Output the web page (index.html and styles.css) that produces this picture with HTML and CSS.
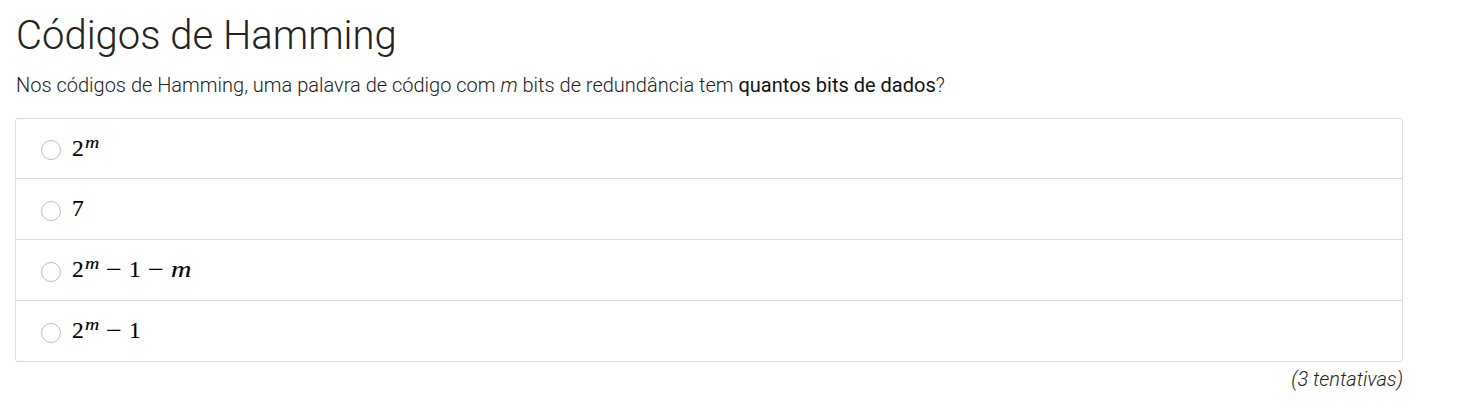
FILE: index.html
```html
<!DOCTYPE html>
<html lang="pt">
<head>
<meta charset="utf-8">
<title>Códigos de Hamming</title>
<link rel="stylesheet" href="styles.css">
</head>
<body>
<div class="page">
  <h1 class="title">Códigos de Hamming</h1>
  <p class="question">Nos códigos de Hamming, uma palavra de código com <em>m</em> bits de redundância tem <strong>quantos bits de dados</strong>?</p>
  <ul class="options">
    <li class="option"><span class="radio"></span><span class="math">2<sup><i>m</i></sup></span></li>
    <li class="option"><span class="radio"></span><span class="math">7</span></li>
    <li class="option"><span class="radio"></span><span class="math">2<sup><i>m</i></sup><span class="op">−</span>1<span class="op">−</span><i>m</i></span></li>
    <li class="option"><span class="radio"></span><span class="math">2<sup><i>m</i></sup><span class="op">−</span>1</span></li>
  </ul>
  <div class="attempts">(3 tentativas)</div>
</div>
</body>
</html>
```

FILE: styles.css
```css
html, body {
  margin: 0;
  padding: 0;
  background: #fff;
}
body {
  font-family: Roboto, "Liberation Sans", sans-serif;
  color: #333;
}
.page {
  width: 1388px;
  margin-left: 15px;
  padding-top: 12px;
}
.title {
  margin: 0 0 0 1px;
  font-weight: 300;
  font-size: 40px;
  line-height: 48px;
  color: #222;
}
.question {
  margin: 11px 0 19px 1px;
  font-size: 20px;
  font-weight: 300;
  line-height: 28px;
  color: #222;
}
.question em {
  font-style: italic;
}
.question strong {
  font-weight: 400;
  color: #111;
}
.options {
  list-style: none;
  margin: 0;
  padding: 0;
  border: 1px solid #dcdcdc;
  border-radius: 3px;
}
.option {
  display: flex;
  align-items: center;
  height: 60px;
  padding-left: 25px;
  border-top: 1px solid #dcdcdc;
}
.option:first-child {
  border-top: none;
  height: 59px;
}
.radio {
  width: 20px;
  height: 20px;
  border: 1px solid #b9bdc1;
  border-radius: 50%;
  box-sizing: border-box;
  margin-right: 11px;
  margin-top: 3px;
  flex: none;
}
.math {
  font-family: "Liberation Serif", "DejaVu Serif", serif;
  font-size: 23.5px;
  color: #000;
  line-height: 1;
  -webkit-text-stroke: 0.15px #000;
}
.math i {
  font-style: italic;
  display: inline-block;
  transform: scaleX(1.2);
  transform-origin: left center;
  margin-right: 0.14em;
}
.math sup {
  font-size: 0.7em;
  vertical-align: 0.5em;
  line-height: 0;
  margin-left: 1px;
}
.op {
  display: inline-block;
  transform: scaleX(1.2);
  margin: 0 0.36em;
}
.attempts {
  text-align: right;
  font-style: italic;
  font-weight: 300;
  font-size: 20px;
  line-height: 24px;
  margin-top: 5px;
  color: #222;
}
```
